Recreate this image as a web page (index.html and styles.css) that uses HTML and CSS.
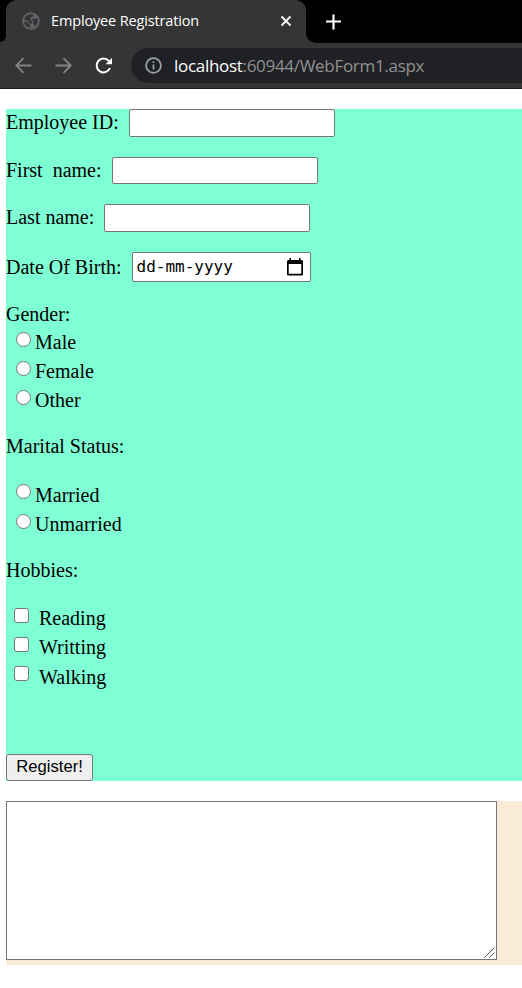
FILE: index.html
```html
<!DOCTYPE html>
<html lang="en">
<head>
<meta charset="utf-8">
<title>Employee Registration</title>
<link rel="stylesheet" href="styles.css">
</head>
<body>
<header class="browser">
  <div class="tabs">
    <div class="edge"></div>
    <div class="tab">
      <svg class="globe" width="18" height="18" viewBox="0 0 18 18"><circle cx="9" cy="9" r="8.8" fill="#5f6368"/><path d="M8.5 2.2Q10 2 11.3 2.6L11 4.4 8.8 5.2 8.6 7.4 6.4 8.3H9.2L10.3 10.8 8 12.3 7.6 15.8Q2.5 14.8 2 9.4L5.2 9.8 6.2 12 7.4 11.5 6.2 9.2 3.5 7.8 2.2 7.8Q3 3 8.5 2.2ZM15.4 6.4Q17 11.5 12.5 14.8L12.3 12 10.8 11.4 11.7 8.9 9.8 7.6 10.2 6.5 12.6 7.4 13.4 6.2Z" fill="#353535"/></svg>
      <span class="tab-title">Employee Registration</span>
      <svg class="close" width="12" height="12" viewBox="0 0 12 12"><path d="M1.5 1.5 10.5 10.5M10.5 1.5 1.5 10.5" stroke="#fff" stroke-width="1.9"/></svg>
    </div>
    <div class="strip">
      <svg width="16" height="16" viewBox="0 0 16 16"><path d="M7.5 .5V15.5M0 7.5H15" stroke="#fff" stroke-width="2.2"/></svg>
    </div>
  </div>
  <div class="toolbar">
    <svg class="arrow" width="18" height="18" viewBox="0 0 18 18"><path d="M16.5 8.5H1.5M8.5 1.2 1.2 8.5 8.5 15.8" fill="none" stroke="#858585" stroke-width="1.8"/></svg>
    <svg class="arrow" width="18" height="18" viewBox="0 0 18 18"><path d="M.5 8.5H15.5M8.5 1.2 15.8 8.5 8.5 15.8" fill="none" stroke="#858585" stroke-width="1.8"/></svg>
    <svg class="reload" width="18" height="18" viewBox="0 0 18 18"><path d="M14.9 11.2A6.9 6.9 0 1 1 13.8 4" fill="none" stroke="#fff" stroke-width="2"/><path d="M17 .8V7.2H10.6Z" fill="#fff"/></svg>
    <div class="address">
      <svg width="17" height="17" viewBox="0 0 17 17"><circle cx="8.5" cy="8.5" r="7.4" fill="none" stroke="#9aa0a6" stroke-width="1.8"/><path d="M8.5 7.5V12.5M8.5 4.3V6.1" stroke="#9aa0a6" stroke-width="1.8"/></svg>
      <span class="url"><b>localhost</b>:60944/WebForm1.aspx</span>
    </div>
  </div>
</header>
<main>
  <form class="form">
    <div class="field"><label for="eid">Employee ID:</label><input id="eid" class="text" type="text"></div>
    <div class="field"><label for="first">First&nbsp; name:</label><input id="first" class="text short" type="text"></div>
    <div class="field"><label for="last">Last name:</label><input id="last" class="text" type="text"></div>
    <div class="field date-field"><span>Date Of Birth:</span>
      <div class="date"><span>dd-mm-yyyy</span><svg width="16" height="18" viewBox="0 0 16 18"><path d="M2.5 0H4V2H12V0H13.5V2H14.5Q16 2 16 3.5V16Q16 17.5 14.5 17.5H1.5Q0 17.5 0 16V3.5Q0 2 1.5 2H2.5ZM1.7 6V15.8H14.3V6Z" fill="#000" fill-rule="evenodd"/></svg></div>
    </div>
    <p class="heading gender">Gender:</p>
    <label class="choice"><input type="radio" name="g">Male</label>
    <label class="choice"><input type="radio" name="g">Female</label>
    <label class="choice"><input type="radio" name="g">Other</label>
    <p class="heading marital">Marital Status:</p>
    <label class="choice raised"><input type="radio" name="m">Married</label>
    <label class="choice"><input type="radio" name="m">Unmarried</label>
    <p class="heading hobbies">Hobbies:</p>
    <label class="choice"><input type="checkbox">Reading</label>
    <label class="choice"><input type="checkbox">Writting</label>
    <label class="choice last raised"><input type="checkbox">Walking</label>
    <button type="button">Register!</button>
  </form>
  <section class="output">
    <div class="area">
      <textarea></textarea>
      <svg class="grip" width="11" height="11" viewBox="0 0 11 11"><path d="M.5 10.5 10.5.5M5.5 10.5 10.5 5.5" stroke="#555" stroke-width="1"/></svg>
    </div>
  </section>
</main>
</body>
</html>
```
FILE: styles.css
```css
* { box-sizing: border-box; }
body { margin: 0; background: #fff; color: #000; font: 20px/31px "Liberation Serif", serif; overflow: hidden; }
svg { display: block; flex: none; }
.browser { height: 89px; background: #353535; border-bottom: 1px solid #202124; font-family: "Open Sans", sans-serif; }
.tabs { display: flex; height: 43px; background: #353535; }
.edge { width: 6px; height: 42px; background: #000; border-bottom-right-radius: 8px; }
.tab { position: relative; display: flex; align-items: center; width: 300px; padding: 0 14px 1px 16px; background: #353535; }
.tab::before, .tab::after { content: ""; position: absolute; top: 0; width: 10px; height: 10px; }
.tab::before { left: 0; background: radial-gradient(circle at 10px 10px, transparent 9.5px, #000 10px); }
.tab::after { right: 0; background: radial-gradient(circle at 0 10px, transparent 9.5px, #000 10px); }
.tab-title { margin-left: 11px; color: #fff; font-size: 14.5px; line-height: 20px; letter-spacing: -.15px; white-space: nowrap; }
.close { margin-left: auto; }
.strip { flex: 1; height: 43px; padding: 14px 0 0 20px; background: #000; border-bottom-left-radius: 10px; }
.toolbar { display: flex; align-items: center; height: 45px; padding-left: 15px; }
.arrow { margin-right: 22px; }
.address { display: flex; align-items: center; flex: 1; height: 35px; margin-left: 18px; padding-left: 14px; background: #202124; border-radius: 18px 0 0 18px; }
.url { margin-left: 12px; color: #919191; font-size: 17px; line-height: 24px; white-space: nowrap; letter-spacing: -.3px; }
.url b { color: #fff; font-weight: 400; }
main { padding: 20px 0 0 6px; }
.form { display: flex; flex-direction: column; align-items: flex-start; height: 672px; background: #7fffd4; }
.field { display: flex; gap: 10px; height: 28px; margin-bottom: 20px; line-height: 26px; white-space: nowrap; }
.field:nth-child(2) { height: 27px; }
.text { width: 206px; height: 28px; border: 1px solid #767676; border-radius: 2px; background: #fff; padding: 1px 3px; font-size: 16px; }
.short { height: 27px; }
.date-field { height: 30px; margin-bottom: 17px; line-height: 30px; }
.date { display: flex; align-items: center; justify-content: space-between; width: 179px; height: 30px; padding: 0 7px 0 4px; background: #fff; border: 1px solid #767676; border-radius: 2px; font: 16px/28px "DejaVu Sans Mono", monospace; }
.heading { margin: 0; }
.gender { height: 28px; }
.marital, .hobbies { margin: 17px 0 20px; height: 29px; }
.hobbies { margin-bottom: 19px; }
.choice { display: flex; align-items: flex-start; height: 29px; }
.choice input { appearance: none; flex: none; width: 15px; height: 15px; margin: 5px 4px 0 10px; background: #fff; border: 1px solid #767676; border-radius: 50%; }
.choice input[type="checkbox"] { margin: 5px 10px 0 8px; border-radius: 3px; }
.choice.raised input { margin-top: 4px; }
.last { margin-top: 1px; }
button { width: 87px; height: 27px; margin-top: auto; padding: 0 0 2px; background: #efefef; border: 1px solid #767676; border-radius: 3px; color: #000; font: 16.67px/22px "Liberation Sans", sans-serif; }
.output { height: 164px; margin-top: 20px; background: #faebd7; }
.area { position: relative; width: 491px; }
textarea { display: block; width: 491px; height: 159px; border: 1px solid #767676; border-radius: 0; background: #fff; resize: none; }
.grip { position: absolute; right: 2px; bottom: 2px; }
```
